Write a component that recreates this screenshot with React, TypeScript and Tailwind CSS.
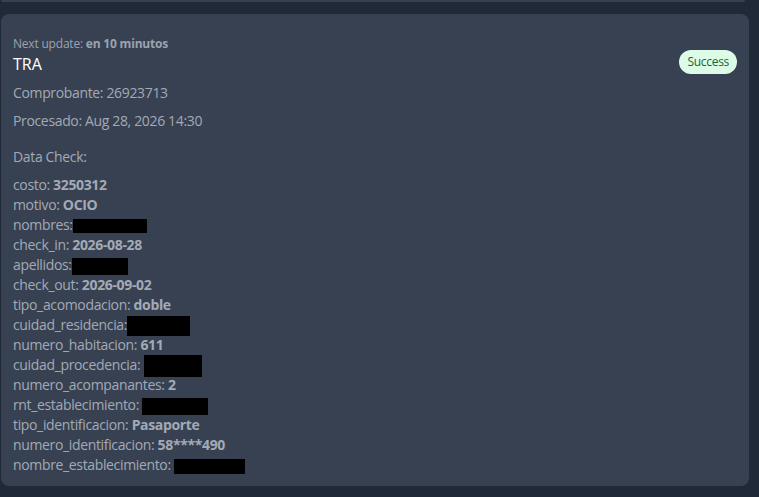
const fields: { key: string; value?: string; redact?: [number, number]; gap?: boolean }[] = [
  { key: "costo", value: "3250312" },
  { key: "motivo", value: "OCIO" },
  { key: "nombres", redact: [74, 14] },
  { key: "check_in", value: "2026-08-28" },
  { key: "apellidos", redact: [56, 17] },
  { key: "check_out", value: "2026-09-02" },
  { key: "tipo_acomodacion", value: "doble" },
  { key: "cuidad_residencia", redact: [63, 20] },
  { key: "numero_habitacion", value: "611" },
  { key: "cuidad_procedencia", redact: [58, 22], gap: true },
  { key: "numero_acompanantes", value: "2" },
  { key: "rnt_establecimiento", redact: [66, 17], gap: true },
  { key: "tipo_identificacion", value: "Pasaporte" },
  { key: "numero_identificacion", value: "58****490" },
  { key: "nombre_establecimiento", redact: [71, 15], gap: true },
]

export default function App() {
  return (
    <div className="w-[759px] h-[497px] overflow-hidden bg-[#1f2937] pl-[1px] font-['Open_Sans',sans-serif]">
      <div className="h-[2px] w-[744px] rounded-b-[2px] bg-[#374151]" />
      <div className="mt-3 w-[748px] h-[472px] rounded-lg bg-[#374151] pl-3 pr-3 pt-[22px]">
        <div className="flex justify-between">
          <div>
            <p className="text-[12px] leading-4 text-[#9ca3af] tracking-[-0.2px]">
              Next update: <span className="font-bold">en 10 minutos</span>
            </p>
            <h2 className="mt-[2px] text-[16px] leading-5 text-white">TRA</h2>
          </div>
          <span className="mt-[14px] h-6 rounded-full bg-[#dcfce7] px-[8px] text-[12px] leading-6 text-[#166534] tracking-[-0.3px]">
            Success
          </span>
        </div>
        <div className="text-[14px] text-[#a3aab6] tracking-[-0.35px]">
          <p className="mt-[9px] leading-5">Comprobante: 26923713</p>
          <p className="mt-2 leading-5">Procesado: Aug 28, 2026 14:30</p>
          <p className="mt-4 leading-5">Data Check:</p>
          <div className="mt-2">
            {fields.map((f) => (
              <div key={f.key} className="h-5 leading-5 whitespace-nowrap">
                {f.key}:{f.gap || f.value ? " " : ""}
                {f.value && <span className="font-bold">{f.value}</span>}
                {f.redact && (
                  <span
                    className="inline-block bg-black align-middle -my-2"
                    style={{ width: f.redact[0], height: f.redact[1] }}
                  />
                )}
              </div>
            ))}
          </div>
        </div>
      </div>
    </div>
  )
}
